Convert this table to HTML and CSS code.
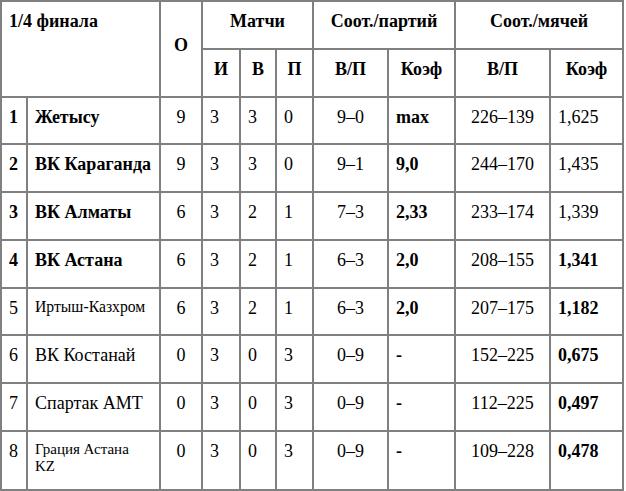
FILE: index.html
```html
<!DOCTYPE html>
<html lang="ru">
<head>
<meta charset="utf-8">
<title>1/4 финала</title>
<link rel="stylesheet" href="styles.css">
</head>
<body>
<table class="standings">
  <colgroup>
    <col class="c-pos"><col class="c-team"><col class="c-pts"><col class="c-i"><col class="c-w"><col class="c-l"><col class="c-sets"><col class="c-sk"><col class="c-balls"><col class="c-bk">
  </colgroup>
  <thead>
    <tr>
      <th class="corner" colspan="2" rowspan="2">1/4 финала</th>
      <th class="mid" rowspan="2">О</th>
      <th colspan="3">Матчи</th>
      <th colspan="2">Соот./партий</th>
      <th colspan="2">Соот./мячей</th>
    </tr>
    <tr>
      <th>И</th><th>В</th><th>П</th><th>В/П</th><th>Коэф</th><th>В/П</th><th>Коэф</th>
    </tr>
  </thead>
  <tbody>
    <tr>
      <td class="b">1</td><td class="b">Жетысу</td><td class="c">9</td><td>3</td><td>3</td><td>0</td><td class="c">9–0</td><td class="b">max</td><td class="c">226–139</td><td>1,625</td>
    </tr>
    <tr>
      <td class="b">2</td><td class="b">ВК Караганда</td><td class="c">9</td><td>3</td><td>3</td><td>0</td><td class="c">9–1</td><td class="b">9,0</td><td class="c">244–170</td><td>1,435</td>
    </tr>
    <tr>
      <td class="b">3</td><td class="b">ВК Алматы</td><td class="c">6</td><td>3</td><td>2</td><td>1</td><td class="c">7–3</td><td class="b">2,33</td><td class="c">233–174</td><td>1,339</td>
    </tr>
    <tr>
      <td class="b">4</td><td class="b">ВК Астана</td><td class="c">6</td><td>3</td><td>2</td><td>1</td><td class="c">6–3</td><td class="b">2,0</td><td class="c">208–155</td><td class="b">1,341</td>
    </tr>
    <tr>
      <td>5</td><td><span class="small wide">Иртыш-Казхром</span></td><td class="c">6</td><td>3</td><td>2</td><td>1</td><td class="c">6–3</td><td class="b">2,0</td><td class="c">207–175</td><td class="b">1,182</td>
    </tr>
    <tr>
      <td>6</td><td>ВК Костанай</td><td class="c">0</td><td>3</td><td>0</td><td>3</td><td class="c">0–9</td><td class="b">-</td><td class="c">152–225</td><td class="b">0,675</td>
    </tr>
    <tr>
      <td>7</td><td>Спартак АМТ</td><td class="c">0</td><td>3</td><td>0</td><td>3</td><td class="c">0–9</td><td class="b">-</td><td class="c">112–225</td><td class="b">0,497</td>
    </tr>
    <tr class="tall">
      <td>8</td><td><span class="small two">Грация Астана KZ</span></td><td class="c">0</td><td>3</td><td>0</td><td>3</td><td class="c">0–9</td><td class="b">-</td><td class="c">109–228</td><td class="b">0,478</td>
    </tr>
  </tbody>
</table>
</body>
</html>
```
FILE: styles.css
```css
html, body {
  margin: 0;
  padding: 0;
  background: #ffffff;
  font-family: "Liberation Serif", "Times New Roman", Times, serif;
}

.standings {
  table-layout: fixed;
  width: 624px;
  border-collapse: separate;
  border-spacing: 0;
  border-top: 2px solid #808080;
  border-left: 2px solid #808080;
  font-size: 18px;
  color: #000;
}

.c-pos { width: 26px; }
.c-team { width: 133px; }
.c-pts { width: 42px; }
.c-i { width: 38px; }
.c-w { width: 36px; }
.c-l { width: 37px; }
.c-sets { width: 75px; }
.c-sk { width: 67px; }
.c-balls { width: 95px; }
.c-bk { width: 73px; }

.standings th,
.standings td {
  box-sizing: border-box;
  border-right: 2px solid #808080;
  border-bottom: 2px solid #808080;
  padding: 9px 7px 15.75px;
  vertical-align: top;
  line-height: normal;
  white-space: nowrap;
  font-family: "Liberation Serif", "Times New Roman", Times, serif;
  font-size: 18px;
}

.standings th {
  font-weight: bold;
  text-align: center;
}

.standings th.corner {
  text-align: left;
}

.standings th.mid {
  vertical-align: middle;
}

.standings td {
  text-align: left;
  font-weight: normal;
}

.standings td.c {
  text-align: center;
}

.standings td.b {
  font-weight: bold;
}

.small {
  display: block;
  font-size: 15px;
  white-space: normal;
}

.small.wide {
  font-size: 15.7px;
}

.small.two {
  line-height: 17px;
}

.standings tr.tall td {
  white-space: normal;
  padding-bottom: 14px;
}
```
